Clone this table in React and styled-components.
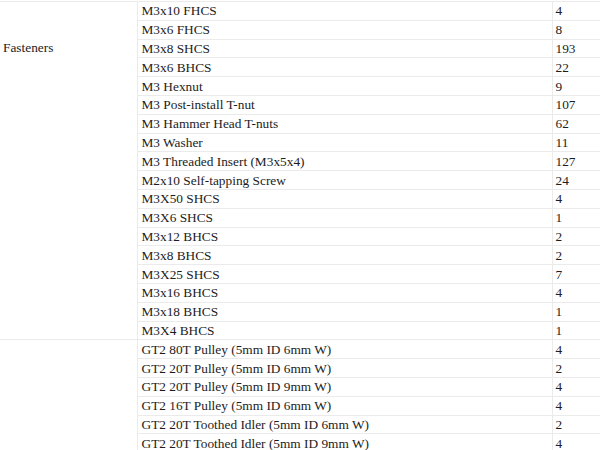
import React from "react";
import styled, { createGlobalStyle } from "styled-components";

const fasteners = [
	["M3x10 FHCS", 4],
	["M3x6 FHCS", 8],
	["M3x8 SHCS", 193],
	["M3x6 BHCS", 22],
	["M3 Hexnut", 9],
	["M3 Post-install T-nut", 107],
	["M3 Hammer Head T-nuts", 62],
	["M3 Washer", 11],
	["M3 Threaded Insert (M3x5x4)", 127],
	["M2x10 Self-tapping Screw", 24],
	["M3X50 SHCS", 4],
	["M3X6 SHCS", 1],
	["M3x12 BHCS", 2],
	["M3x8 BHCS", 2],
	["M3X25 SHCS", 7],
	["M3x16 BHCS", 4],
	["M3x18 BHCS", 1],
	["M3X4 BHCS", 1],
];

const motion = [
	["GT2 80T Pulley (5mm ID 6mm W)", 4],
	["GT2 20T Pulley (5mm ID 6mm W)", 2],
	["GT2 20T Pulley (5mm ID 9mm W)", 4],
	["GT2 16T Pulley (5mm ID 6mm W)", 4],
	["GT2 20T Toothed Idler (5mm ID 6mm W)", 2],
	["GT2 20T Toothed Idler (5mm ID 9mm W)", 4],
];

const groups = [
	{ name: "Fasteners", items: fasteners, labelOffset: 38 },
	{ name: "", items: motion, labelOffset: 0 },
];

const PartsTable = () => (
	<Sheet>
		<Table>
			<colgroup>
				<col style={{ width: 137 }} />
				<col style={{ width: 415 }} />
				<col style={{ width: 70 }} />
			</colgroup>
			<tbody>
				{groups.map((group) =>
					group.items.map(([part, qty], i) => (
						<Row key={group.name + part}>
							{i === 0 && (
								<GroupCell rowSpan={group.items.length} $offset={group.labelOffset}>
									{group.name}
								</GroupCell>
							)}
							<Cell>{part}</Cell>
							<QtyCell>{qty}</QtyCell>
						</Row>
					))
				)}
			</tbody>
		</Table>
	</Sheet>
);

export default function App() {
	return (
		<>
			<GlobalStyle />
			<PartsTable />
		</>
	);
}

// ====================== STYLED COMPONENTS ======================

const GlobalStyle = createGlobalStyle`
	html, body {
		margin: 0;
		padding: 0;
		background: #ffffff;
		overflow: hidden;
	}
	body {
		font-family: "Liberation Serif", "Times New Roman", serif;
		font-size: 13.33px;
		color: #1c1c1c;
	}
`;

const Sheet = styled.div`
	width: 600px;
	height: 450px;
	overflow: hidden;
	padding-top: 1px;
`;

const Table = styled.table`
	border-collapse: collapse;
	table-layout: fixed;
	width: 622px;
	border-top: 1px solid #ebebeb;
`;

const Row = styled.tr`
	height: 18.8px;
`;

const Cell = styled.td`
	border: 1px solid #ebebeb;
	padding: 0 3px 0 4px;
	height: 17.8px;
	line-height: 15px;
	white-space: nowrap;
	vertical-align: middle;
`;

const QtyCell = styled(Cell)`
	padding-left: 3px;
`;

const GroupCell = styled(Cell)`
	border-left: none;
	padding: ${(props) => props.$offset}px 3px 0 3px;
	vertical-align: top;
`;
